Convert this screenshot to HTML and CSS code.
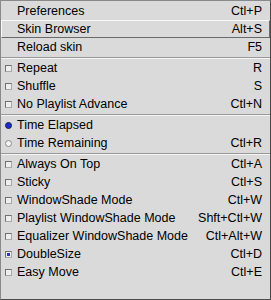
FILE: index.html
```
<!DOCTYPE html>
<html lang="en">
  <head>
    <meta charset="UTF-8" />
    <title>Menu</title>
    <link rel="stylesheet" href="styles.css">
  </head>
  <body>
    <div class="menu">
      <div class="item"><span class="mark"></span><span class="label">Preferences</span><span class="key">Ctl+P</span></div>
      <div class="item hover"><span class="mark"></span><span class="label">Skin Browser</span><span class="key">Alt+S</span></div>
      <div class="item"><span class="mark"></span><span class="label">Reload skin</span><span class="key">F5</span></div>
      <div class="sep"></div>
      <div class="item"><span class="mark"><i class="check"></i></span><span class="label">Repeat</span><span class="key">R</span></div>
      <div class="item"><span class="mark"><i class="check"></i></span><span class="label">Shuffle</span><span class="key">S</span></div>
      <div class="item"><span class="mark"><i class="check"></i></span><span class="label">No Playlist Advance</span><span class="key">Ctl+N</span></div>
      <div class="sep"></div>
      <div class="item"><span class="mark"><i class="radio on"></i></span><span class="label">Time Elapsed</span><span class="key"></span></div>
      <div class="item"><span class="mark"><i class="radio"></i></span><span class="label">Time Remaining</span><span class="key">Ctl+R</span></div>
      <div class="sep"></div>
      <div class="item"><span class="mark"><i class="check"></i></span><span class="label">Always On Top</span><span class="key">Ctl+A</span></div>
      <div class="item"><span class="mark"><i class="check"></i></span><span class="label">Sticky</span><span class="key">Ctl+S</span></div>
      <div class="item"><span class="mark"><i class="check"></i></span><span class="label">WindowShade Mode</span><span class="key">Ctl+W</span></div>
      <div class="item"><span class="mark"><i class="check"></i></span><span class="label">Playlist WindowShade Mode</span><span class="key">Shft+Ctl+W</span></div>
      <div class="item"><span class="mark"><i class="check"></i></span><span class="label">Equalizer WindowShade Mode</span><span class="key">Ctl+Alt+W</span></div>
      <div class="item"><span class="mark"><i class="check on"></i></span><span class="label">DoubleSize</span><span class="key">Ctl+D</span></div>
      <div class="item"><span class="mark"><i class="check"></i></span><span class="label">Easy Move</span><span class="key">Ctl+E</span></div>
    </div>
  </body>
</html>
```
FILE: styles.css
```
body {
  margin: 0;
  background: #dadada;
  font-family: "Liberation Sans", Arial, sans-serif;
  font-size: 12.5px;
  color: #000;
}
.menu {
  width: 271px;
  height: 300px;
  box-sizing: border-box;
  padding: 1px 0 1px 0;
  background: #dadada;
  border: 1px solid;
  border-color: #8a8a8a #4a4a4a #4a4a4a #8a8a8a;
}
.item {
  display: flex;
  align-items: center;
  height: 18px;
  box-sizing: border-box;
  border: 1px solid transparent;
}
.item.hover {
  border-color: #fafafa #6a6a6a #6a6a6a #fafafa;
}
.mark {
  width: 15px;
  flex: none;
  display: flex;
  padding-left: 3px;
  box-sizing: border-box;
}
.label {
  flex: 1;
  white-space: nowrap;
}
.key {
  padding-right: 7px;
  white-space: nowrap;
}
.sep {
  height: 0;
  border-top: 1px solid #9a9a9a;
  border-bottom: 1px solid #f4f4f4;
  margin: 1px 0 0;
}
.check {
  display: block;
  width: 5px;
  height: 5px;
  border: 1px solid;
  border-color: #707070 #a8a8a8 #a8a8a8 #707070;
  background: #eeeeee;
  position: relative;
}
.check.on::after {
  content: "";
  position: absolute;
  left: 1px;
  top: 1px;
  width: 3px;
  height: 3px;
  background: #3030d0;
}
.radio {
  display: block;
  width: 5px;
  height: 5px;
  border: 1px solid #8a8a8a;
  border-radius: 50%;
  background: #f4f4f4;
}
.radio.on {
  background: #1a2ad8;
  border-color: #20243a;
}
```
